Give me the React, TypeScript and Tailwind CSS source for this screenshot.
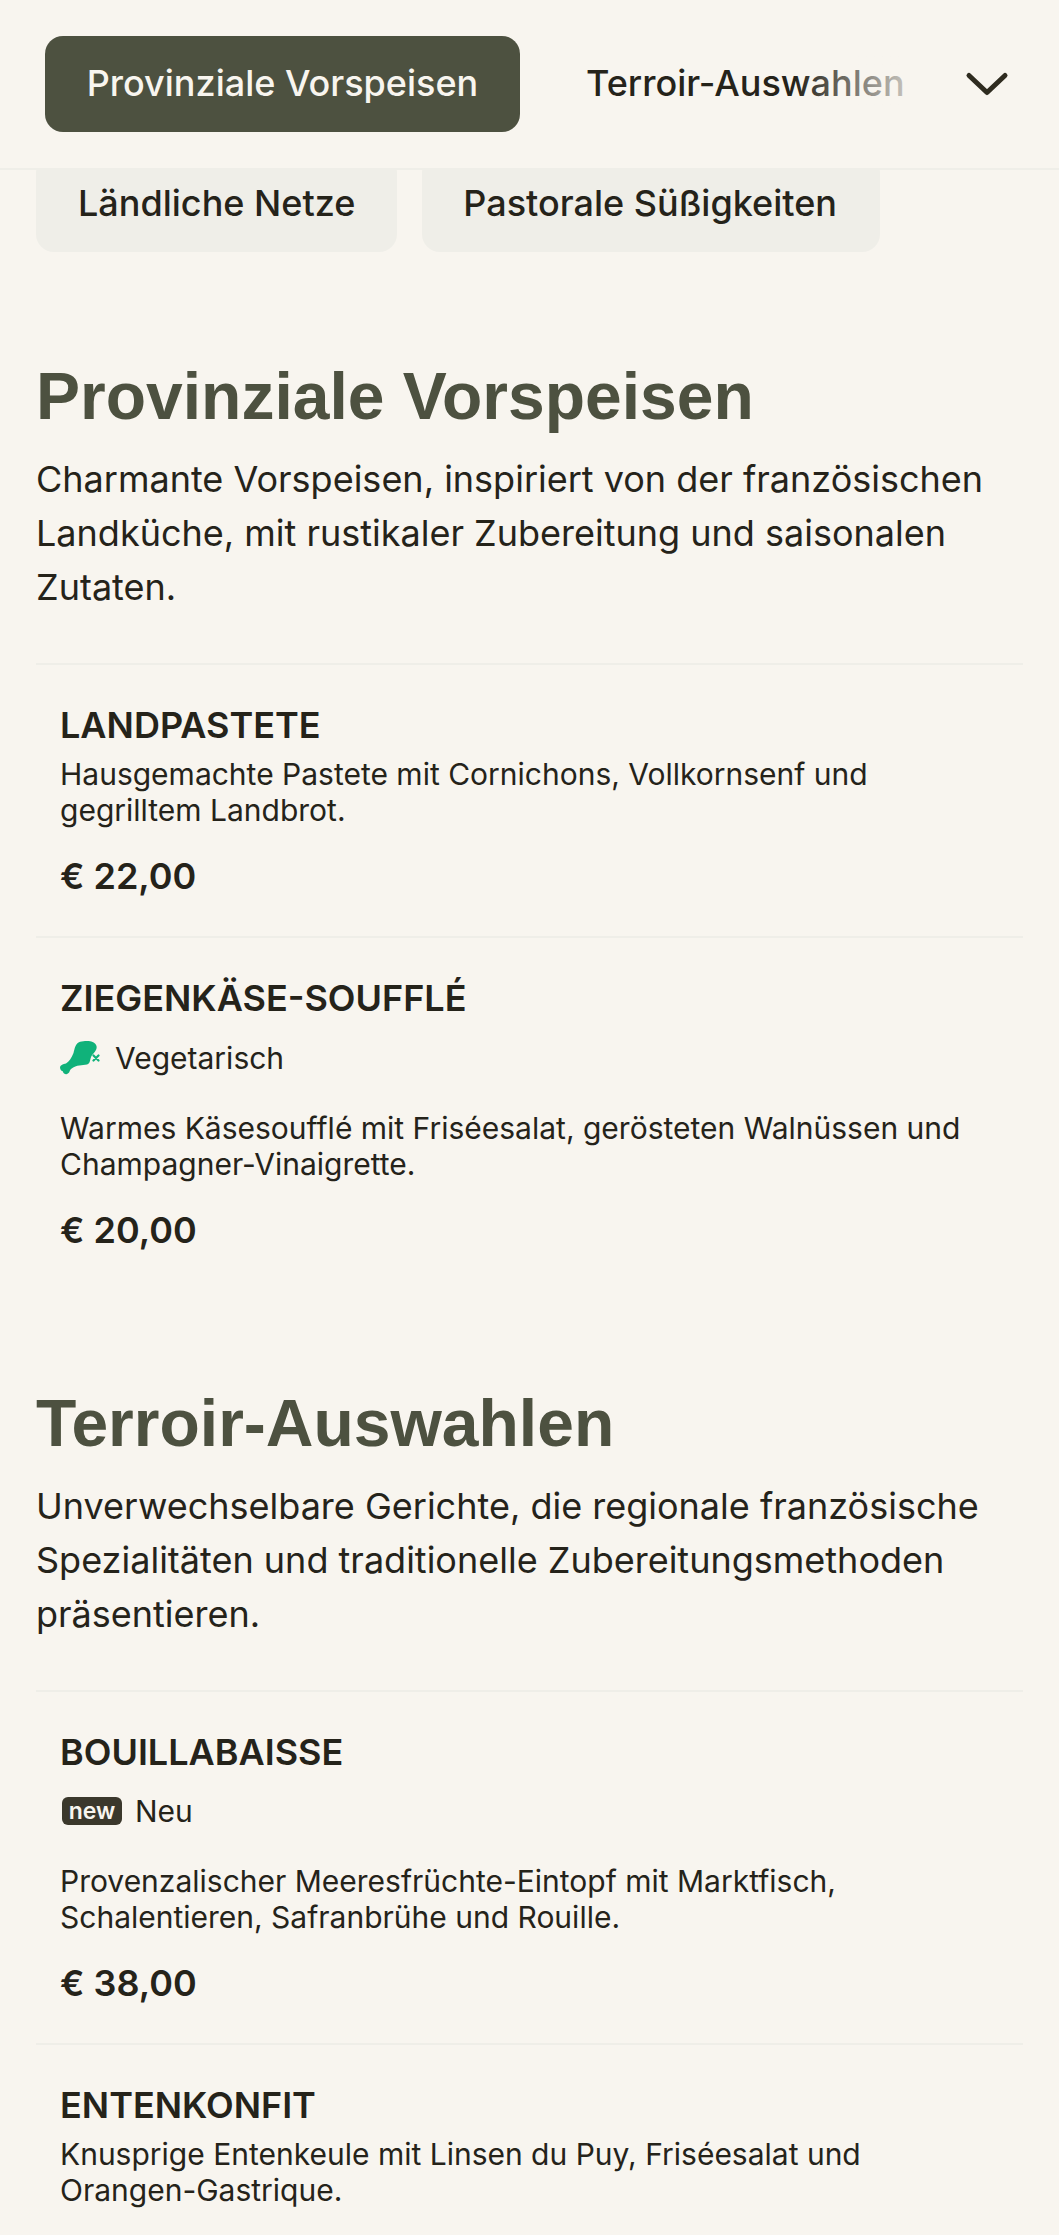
import React from "react";

const inter = "font-['Inter','Liberation_Sans',sans-serif]";

function VeggieIcon() {
  return (
    <svg width="40" height="34" viewBox="0 0 40 34" className="shrink-0">
      <path d="M25 0C30 -.5 35.500 1 36.500 5C37.500 9 33.500 12 31.500 15C29.500 19 30.500 22.500 27 23.500C22 24.500 17 23.500 11 28C9 30 10 32 7 33C4 34 3 31 2.500 30C1 30 0 28 0 26C.5 24 3 23 6 22.500C9 20.500 11.500 17 13.500 12C14.500 8 15.500 3 18.500 1.500C20.500 .5 23 .2 25 0Z" fill="#10b27a" />
      <path d="M33.500 14.500l5 5M38.500 14.500l-5 5" stroke="#10b27a" strokeWidth="2.200" strokeLinecap="round" />
    </svg>
  );
}

function Item({ name, tag, desc, price }: { name: string; tag?: React.ReactNode; desc: string[]; price?: string }) {
  return (
    <div className="px-6 border-t-2 border-[#efeee8] pt-[38px] pb-[38px]">
      <h3 className="text-[36px] leading-[44px] font-semibold text-[#25231a]">{name}</h3>
      {tag}
      <p className="mt-[9px] text-[30px] leading-[36px] text-[#25231a]">
        {desc.map((l) => (
          <span className="block" key={l}>{l}</span>
        ))}
      </p>
      {price && <p className="mt-[26px] text-[36px] leading-[44px] font-semibold text-[#25231a]">{price}</p>}
    </div>
  );
}

export default function App() {
  return (
    <div className={`${inter} w-[1059px] h-[2235px] overflow-hidden bg-[#f8f5ef]`}>
      <header className="relative z-10 h-[170px] flex items-center pl-[45px] bg-[#f8f5ef] border-b-2 border-[#efeee8]">
        <div className="w-[475px] h-[96px] pb-[2px] flex items-center justify-center rounded-[18px] bg-[#4d5140] text-[36px] font-medium text-[#f8f5ef]">
          Provinziale Vorspeisen
        </div>
        <div className="relative ml-[66px] w-[319px] text-[36px] font-medium text-[#25231a] whitespace-nowrap -mt-[2px]">
          Terroir-Auswahlen
          <div className="absolute inset-y-0 right-0 w-[110px] bg-gradient-to-r from-[#f8f5ef00] to-[#f8f5efc0]" />
        </div>
        <svg width="44" height="26" viewBox="0 0 44 26" className="ml-[60px]" fill="none" stroke="#2f2c20" strokeWidth="5" strokeLinecap="round" strokeLinejoin="round">
          <path d="M4 4.500l18 17 18-17" />
        </svg>
      </header>

      <div className="flex gap-[25px] pl-[36px] -mt-[16px]">
        <div className="h-[98px] px-[42px] flex items-center rounded-[18px] bg-[#efeee8] text-[36px] font-medium text-[#25231a]">Ländliche Netze</div>
        <div className="h-[98px] pl-[41px] pr-[43px] flex items-center rounded-[18px] bg-[#efeee8] text-[36px] font-medium text-[#25231a]">Pastorale Süßigkeiten</div>
      </div>

      <section className="px-[36px] mt-[104px]">
        <h2 className="font-['Liberation_Sans',sans-serif] font-bold text-[66px] leading-[80px] text-[#4d5140]">Provinziale Vorspeisen</h2>
        <p className="mt-[16px] text-[36px] leading-[54px] text-[#25231a]">Charmante Vorspeisen, inspiriert von der französischen Landküche, mit rustikaler Zubereitung und saisonalen Zutaten.</p>
        <div className="mt-[49px]">
          <Item name="LANDPASTETE" desc={["Hausgemachte Pastete mit Cornichons, Vollkornsenf und", "gegrilltem Landbrot."]} price="€ 22,00" />
          <Item
            name="ZIEGENKÄSE-SOUFFLÉ"
            tag={
              <div className="mt-[18px] mb-[32px] flex items-center gap-[15px] text-[30px] leading-[40px] text-[#25231a]">
                <VeggieIcon /> Vegetarisch
              </div>
            }
            desc={["Warmes Käsesoufflé mit Friséesalat, gerösteten Walnüssen und", "Champagner-Vinaigrette."]}
            price="€ 20,00"
          />
        </div>
      </section>

      <section className="px-[36px] mt-[93px]">
        <h2 className="font-['Liberation_Sans',sans-serif] font-bold text-[66px] leading-[80px] text-[#4d5140]">Terroir-Auswahlen</h2>
        <p className="mt-[16px] text-[36px] leading-[54px] text-[#25231a]">Unverwechselbare Gerichte, die regionale französische Spezialitäten und traditionelle Zubereitungsmethoden präsentieren.</p>
        <div className="mt-[49px]">
          <Item
            name="BOUILLABAISSE"
            tag={
              <div className="mt-[17px] mb-[32px] flex items-center gap-[13px] text-[30px] leading-[40px] text-[#25231a]">
                <span className="ml-[2px] w-[60px] h-[28px] flex items-center justify-center rounded-[6px] bg-[#3b382c] text-[#f8f5ef] text-[23px] leading-none font-semibold">new</span> Neu
              </div>
            }
            desc={["Provenzalischer Meeresfrüchte-Eintopf mit Marktfisch,", "Schalentieren, Safranbrühe und Rouille."]}
            price="€ 38,00"
          />
          <Item name="ENTENKONFIT" desc={["Knusprige Entenkeule mit Linsen du Puy, Friséesalat und", "Orangen-Gastrique."]} />
        </div>
      </section>
    </div>
  );
}
